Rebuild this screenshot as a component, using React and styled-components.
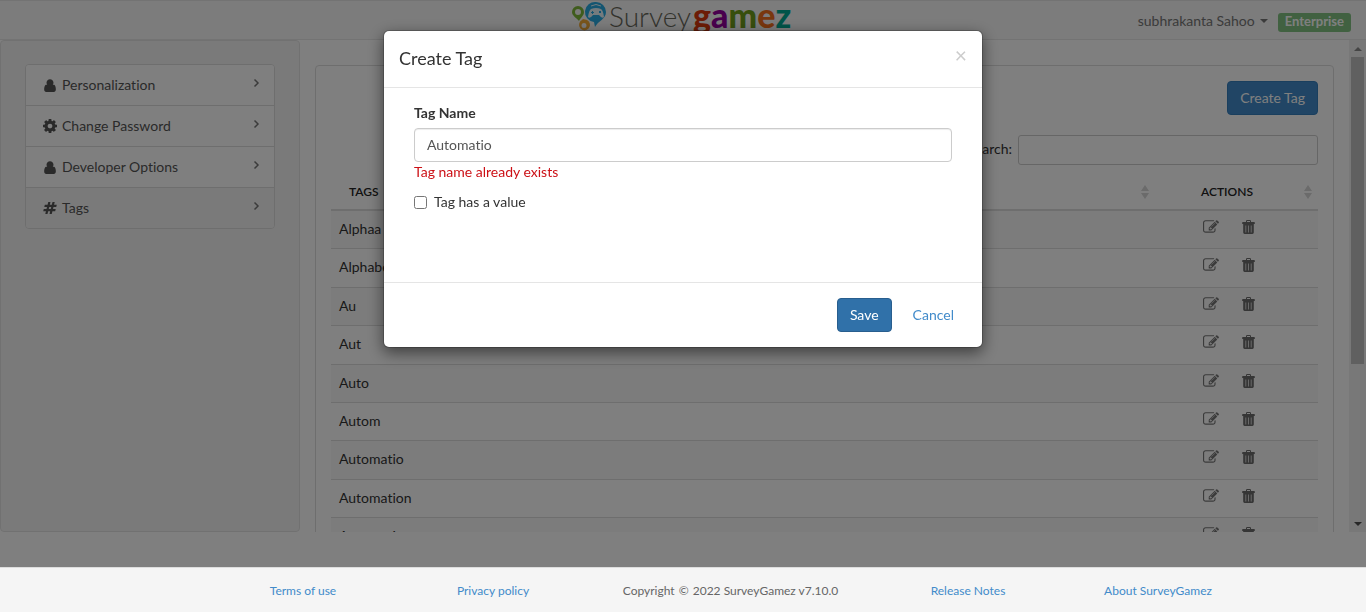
import React, { useState } from 'react';
import styled, { createGlobalStyle } from 'styled-components';

const GlobalStyle = createGlobalStyle`
  *, *::before, *::after { box-sizing: border-box; }
  body {
    margin: 0;
    background: #fff;
    color: #333;
    font-family: Lato, "Liberation Sans", sans-serif;
    font-size: 14px;
    font-variant-ligatures: none;
    line-height: 20px;
  }
  button, input { font: inherit; font-variant-ligatures: none; }
`;

const Page = styled.div`
  display: flex;
  flex-direction: column;
  height: 100vh;
  overflow: hidden;
`;

const TopBar = styled.header`
  display: grid;
  grid-template-columns: 1fr auto 1fr;
  flex: none;
  height: 40px;
  padding: 0 15px;
  background: #f8f8f8;
  border: solid #e7e7e7;
  border-width: 1px 0;
`;

const Brand = styled.a`
  grid-column: 2;
  display: flex;
`;

const Account = styled.div`
  display: flex;
  align-items: center;
  justify-content: flex-end;
  gap: 10px;
  padding-top: 4px;
`;

const UserMenu = styled.button`
  display: flex;
  align-items: center;
  gap: 5px;
  padding: 0 0 2px;
  border: 0;
  background: none;
  color: #777;
`;

const Caret = styled.span`
  border: 4px solid transparent;
  border-top-color: currentColor;
  border-bottom: 0;
`;

const PlanBadge = styled.span`
  padding: 0 7px 2px;
  border-radius: 3px;
  background: #82c382;
  color: #fff;
  font-size: 13px;
  font-weight: 700;
  line-height: 17px;
`;

const Workspace = styled.div`
  display: flex;
  flex: 1;
  min-height: 0;
  margin-bottom: 35px;
  overflow: hidden;
`;

const Sidebar = styled.aside`
  flex: none;
  width: 300px;
  padding: 23px 24px;
  background: #f5f5f5;
  border: 1px solid #e3e3e3;
  border-radius: 4px;
`;

const Menu = styled.nav`
  border: 1px solid #ddd;
  border-radius: 4px;
  overflow: hidden;
`;

const MenuLink = styled.a`
  display: flex;
  align-items: center;
  gap: 5px;
  padding: 10px 14px 10px 17px;
  background: ${(p) => (p.$active ? '#f5f5f5' : '#fff')};
  color: #555;
  text-decoration: none;
  & + & { border-top: 1px solid #ddd; }
  & > span { flex: 1; }
`;

const Glyph = styled.svg`
  flex: none;
  width: ${(p) => p.$size || 14}px;
  height: 14px;
  fill: ${(p) => p.$color || '#555'};
`;

const Chevron = styled.svg`
  width: 7px;
  height: 10px;
  margin-bottom: 5px;
  fill: none;
  stroke: #777;
  stroke-width: 1.5;
`;

const Main = styled.main`
  flex: 1;
  min-width: 0;
  padding: 25px 15px 0;
`;

const Panel = styled.section`
  padding: 15px;
  border: 1px solid #ddd;
  border-radius: 4px;
`;

const Actions = styled.div`
  display: flex;
  justify-content: flex-end;
  margin-bottom: 20px;
`;

const PrimaryButton = styled.button`
  height: 34px;
  padding: 0 12px;
  border: 1px solid ${(p) => (p.$pressed ? '#285e8e' : '#357ebd')};
  border-radius: 4px;
  background: ${(p) => (p.$pressed ? '#3071a9' : '#428bca')};
  color: #fff;
`;

const SearchRow = styled.div`
  display: flex;
  align-items: flex-start;
  justify-content: flex-end;
  gap: 6px;
  margin-bottom: 8px;
`;

const SearchLabel = styled.label`
  padding-top: 4px;
`;

const SearchInput = styled.input`
  width: 300px;
  height: 30px;
  padding: 5px 10px;
  border: 1px solid #ccc;
  border-radius: 3px;
  background: #fff;
`;

const TagTable = styled.table`
  width: 100%;
  border-collapse: separate;
  border-spacing: 0;
  table-layout: fixed;
`;

const ActionCol = styled.col`
  width: 163px;
`;

const HeadCell = styled.th`
  height: 38px;
  padding: 2px 6px 0 ${(p) => p.$indent}px;
  border-bottom: 2px solid #ddd;
  color: #222;
  font-size: 12px;
  font-weight: 600;
  text-align: left;
  text-transform: uppercase;
`;

const HeadContent = styled.div`
  display: flex;
  align-items: center;
  justify-content: space-between;
`;

const Row = styled.tr`
  background: #fff;
  &:nth-child(odd) { background: #f9f9f9; }
  &:not(:first-child) > td { border-top: 1px solid #ddd; }
`;

const Cell = styled.td`
  padding: 7px 8px 9px ${(p) => p.$indent || 8}px;
  line-height: 1.53;
  vertical-align: top;
`;

const RowTools = styled.div`
  display: flex;
  align-items: center;
  gap: 23px;
  height: 18px;
`;

const ToolButton = styled.button`
  display: flex;
  padding: 0;
  border: 0;
  background: none;
`;

const Scrollbar = styled.div`
  display: flex;
  flex: none;
  flex-direction: column;
  width: 17px;
  padding: 0 2px;
  background: #f1f1f1;
`;

const ScrollArrow = styled.span`
  display: flex;
  flex: none;
  align-items: center;
  justify-content: center;
  height: 17px;
  &::before {
    content: '';
    border: 4px solid transparent;
    ${(p) => (p.$down
      ? 'border-top-color: #505050; border-bottom: 0;'
      : 'border-bottom-color: #8b8b8b; border-top: 0;')}
  }
`;

const ScrollTrack = styled.div`
  flex: 1;
`;

const ScrollThumb = styled.div`
  height: 67%;
  background: #c1c1c1;
`;

const Backdrop = styled.div`
  position: fixed;
  inset: 0;
  z-index: 10;
  padding: 30px 0;
  background: rgba(0, 0, 0, 0.5);
`;

const Dialog = styled.form`
  max-width: 600px;
  margin: 0 auto;
  border: 1px solid rgba(0, 0, 0, 0.2);
  border-radius: 6px;
  background: #fff;
  background-clip: padding-box;
  box-shadow: 0 5px 15px rgba(0, 0, 0, 0.5);
`;

const DialogHeader = styled.div`
  display: flex;
  justify-content: space-between;
  padding: 14px 15px 16px;
  border-bottom: 1px solid #e5e5e5;
`;

const DialogTitle = styled.h4`
  margin: 0;
  font-size: 18px;
  font-weight: 400;
  line-height: 26px;
`;

const CloseButton = styled.button`
  height: 20px;
  padding: 0;
  border: 0;
  background: none;
  color: #ccc;
  font-size: 21px;
  line-height: 20px;
`;

const DialogBody = styled.div`
  min-height: 194px;
  padding: 15px 30px;
`;

const FieldLabel = styled.label`
  display: block;
  margin-bottom: 5px;
  font-weight: 700;
`;

const TextInput = styled.input`
  display: block;
  width: 100%;
  height: 34px;
  padding: 5px 12px 7px;
  border: 1px solid #ccc;
  border-radius: 4px;
  color: #555;
  box-shadow: inset 0 1px 1px rgba(0, 0, 0, 0.075);
`;

const ErrorText = styled.p`
  margin: 0 0 10px;
  color: #cc1016;
`;

const CheckLabel = styled.label`
  display: flex;
  align-items: center;
  gap: 7px;
`;

const Checkbox = styled.input`
  width: 13px;
  height: 13px;
  margin: 0;
`;

const DialogFooter = styled.div`
  display: flex;
  justify-content: flex-end;
  gap: 8px;
  padding: 15px;
  border-top: 1px solid #e5e5e5;
`;

const LinkButton = styled.button`
  height: 34px;
  padding: 0 13px;
  border: 0;
  background: none;
  color: #428bca;
`;

const Footer = styled.footer`
  position: relative;
  z-index: 20;
  flex: none;
  height: 45px;
  padding: 13px 0;
  border-top: 1px solid #ddd;
  background: #f5f5f5;
  color: #666;
  font-size: 12px;
`;

const FooterGrid = styled.div`
  display: grid;
  grid-template-columns: repeat(12, 1fr);
  max-width: 1140px;
  margin: 0 auto;
  text-align: center;
`;

const FooterItem = styled.div`
  grid-column: ${(p) => p.$from} / ${(p) => p.$to};
  white-space: nowrap;
`;

const FooterLink = styled.a`
  color: #428bca;
  text-decoration: none;
`;

const CopyrightSign = styled.span`
  margin: 0 1px;
`;

const PATHS = {
  user: 'M1280 1399q0 109-62.500 187t-150.500 78h-854q-88 0-150.500-78t-62.500-187q0-85 8.500-160.500t31.500-152 58.500-131 94-89 134.500-34.500q131 128 313 128t313-128q76 0 134.500 34.500t94 89 58.500 131 31.500 152 8.500 160.500zM1024 640q0 159-112.500 271.500t-271.500 112.500-271.500-112.500-112.500-271.500 112.500-271.500 271.500-112.500 271.500 112.500 112.500 271.500z',
  cog: 'M1024 896q0-106-75-181t-181-75-181 75-75 181 75 181 181 75 181-75 75-181zm512-109v222q0 12-8 23t-20 13l-185 28q-19 54-39 91 35 50 107 138 10 12 10 25t-9 23q-27 37-99 108t-94 71q-12 0-26-9l-138-108q-44 23-91 38-16 136-29 186-7 28-36 28h-222q-14 0-24.500-8.500t-11.500-21.500l-28-184q-49-16-90-37l-141 107q-10 9-25 9-14 0-25-11-126-114-165-168-7-10-7-23 0-12 8-23 15-21 51-66.500t54-70.500q-27-50-41-99l-183-27q-13-2-21-12.500t-8-23.500v-222q0-12 8-23t19-13l186-28q14-46 39-92-40-57-107-138-10-12-10-24 0-10 9-23 26-36 98.500-107.500t94.500-71.500q13 0 26 10l138 107q44-23 91-38 16-136 29-186 7-28 36-28h222q14 0 24.500 8.500t11.500 21.500l28 184q49 16 90 37l142-107q9-9 24-9 13 0 25 10 129 119 165 170 7 8 7 22 0 12-8 23-15 21-51 66.500t-54 70.500q26 50 41 98l183 28q13 2 21 12.500t8 23.500z',
  hash: 'M991 1024l64-256h-254l-64 256h254zm768-504l-56 224q-7 24-31 24h-327l-64 256h311q15 0 25 12 10 14 6 28l-56 224q-5 24-31 24h-327l-81 328q-7 24-31 24h-224q-16 0-26-12-9-12-6-28l78-312h-254l-81 328q-7 24-31 24h-225q-15 0-25-12-9-12-6-28l78-312h-311q-15 0-25-12-9-12-6-28l56-224q7-24 31-24h327l64-256h-311q-15 0-25-12-10-14-6-28l56-224q5-24 31-24h327l81-328q7-24 32-24h224q15 0 25 12 9 12 6 28l-78 312h254l81-328q7-24 32-24h224q15 0 25 12 9 12 6 28l-78 312h311q15 0 25 12 9 12 6 28z',
  edit: 'M888 1184l116-116-152-152-116 116v56h96v96h56zm440-720q-16-16-33 1l-350 350q-17 17-1 33t33-1l350-350q17-17 1-33zm80 594v190q0 119-84.500 203.500t-203.500 84.500h-832q-119 0-203.500-84.500t-84.500-203.500v-832q0-119 84.500-203.500t203.500-84.500h832q63 0 117 25 15 7 18 23 3 17-9 29l-49 49q-14 14-32 8-23-6-45-6h-832q-66 0-113 47t-47 113v832q0 66 47 113t113 47h832q66 0 113-47t47-113v-126q0-13 9-22l64-64q15-15 35-7t20 29zm-96-738l288 288-672 672h-288v-288zm444 132l-92 92-288-288 92-92q28-28 68-28t68 28l152 152q28 28 28 68t-28 68z',
};

const BOXES = {
  user: '0 128 1280 1536',
  cog: '0 128 1536 1536',
  hash: '0 128 1792 1536',
  edit: '0 128 1792 1536',
};

function Icon({ name, size, color }) {
  return (
    <Glyph viewBox={BOXES[name]} $size={size} $color={color} aria-hidden="true">
      <path d={PATHS[name]} />
    </Glyph>
  );
}

function TrashIcon() {
  return (
    <Glyph viewBox="0 0 13 14" $size={13} $color="#6c6c6c" aria-hidden="true">
      <path fillRule="evenodd" d="M4 2V1.200Q4 0 5.200 0h2.600Q9 0 9 1.200V2h3.200q.6 0 .6.600V4H.2V2.600Q.2 2 .8 2zM5 2h3V1H5zM1.200 4h10.600v8.600q0 1.400-1.400 1.400H2.600q-1.400 0-1.400-1.400zM3.500 5.500v7h.7v-7zm2.600 0v7h.7v-7zm2.700 0v7h.7v-7z" />
    </Glyph>
  );
}

function SortIcon() {
  return (
    <svg width="8" height="14" viewBox="0 0 8 14" fill="#d6d6d6" aria-hidden="true">
      <path d="M4 0l4 6H0zM4 14L0 8h8z" />
    </svg>
  );
}

function Logo() {
  return (
    <svg width="222" height="38" viewBox="0 0 222 38" role="img" aria-label="SurveyGamez">
      <path fill="#7fb93a" fillRule="evenodd" d="M6 5a6 6 0 0 1 6 6c0 4-4 6-5 9-2-3-7-5-7-9a6 6 0 0 1 6-6zm0 3a3 3 0 1 0 0 6 3 3 0 0 0 0-6z" />
      <path fill="#f2ac38" fillRule="evenodd" d="M11 18l4 1a5.500 5.500 0 1 1-5 0zm1 4a2.500 2.500 0 1 0 0 5 2.500 2.500 0 0 0 0-5z" />
      <path fill="#29abe2" d="M24 1a10 10 0 0 1 10 10c0 7-8 9-11 15l-1-5A10 10 0 0 1 24 1z" />
      <path fill="#e8f6fc" fillRule="evenodd" d="M19 8q5-2 10 0 2 1 3 8-2 2-5-2h-6q-3 4-5 2 1-7 3-8zm1 2v1h-1v1h1v1h1v-1h1v-1h-1v-1zm7 0v2h2v-2z" />
      <path fill="none" stroke="#e8f6fc" d="M19 5q5-3 10 0" />
      <text x="37" y="26" fill="#666659" fontFamily="Lato, sans-serif" fontSize="28" fontWeight="300">Survey</text>
      <text x="121" y="27" fontFamily="Lato, sans-serif" fontSize="34" fontWeight="900">
        <tspan fill="#d9380b">g</tspan>
        <tspan fill="#93009c">a</tspan>
        <tspan fill="#6f9c1b">m</tspan>
        <tspan fill="#f26f1d">e</tspan>
        <tspan fill="#00a892">z</tspan>
      </text>
    </svg>
  );
}

const MENU = [
  { icon: 'user', label: 'Personalization' },
  { icon: 'cog', label: 'Change Password' },
  { icon: 'user', label: 'Developer Options' },
  { icon: 'hash', label: 'Tags', active: true },
];

const TAGS = ['Alphaa', 'Alphabet', 'Au', 'Aut', 'Auto', 'Autom', 'Automatio', 'Automation', 'Automations'];

export default function App() {
  const [name, setName] = useState('Automatio');
  return (
    <>
      <GlobalStyle />
      <Page>
        <TopBar>
          <Brand href="#"><Logo /></Brand>
          <Account>
            <UserMenu type="button">subhrakanta Sahoo <Caret /></UserMenu>
            <PlanBadge>Enterprise</PlanBadge>
          </Account>
        </TopBar>
        <Workspace>
          <Sidebar>
            <Menu aria-label="Settings">
              {MENU.map((m) => (
                <MenuLink key={m.label} href="#" $active={m.active}>
                  <Icon name={m.icon} />
                  <span>{m.label}</span>
                  <Chevron viewBox="0 0 7 10" aria-hidden="true"><path d="M1.500 1.500L5 5 1.500 8.500" /></Chevron>
                </MenuLink>
              ))}
            </Menu>
          </Sidebar>
          <Main>
            <Panel>
              <Actions><PrimaryButton type="button">Create Tag</PrimaryButton></Actions>
              <SearchRow>
                <SearchLabel htmlFor="search">Search:</SearchLabel>
                <SearchInput id="search" type="search" />
              </SearchRow>
              <TagTable>
                <colgroup><col /><ActionCol /></colgroup>
                <thead>
                  <tr>
                    <HeadCell $indent={18}><HeadContent>Tags <SortIcon /></HeadContent></HeadCell>
                    <HeadCell $indent={46}><HeadContent>Actions <SortIcon /></HeadContent></HeadCell>
                  </tr>
                </thead>
                <tbody>
                  {TAGS.map((tag) => (
                    <Row key={tag}>
                      <Cell>{tag}</Cell>
                      <Cell $indent={48}>
                        <RowTools>
                          <ToolButton type="button" aria-label={`Edit ${tag}`}><Icon name="edit" size={16} color="#777" /></ToolButton>
                          <ToolButton type="button" aria-label={`Delete ${tag}`}><TrashIcon /></ToolButton>
                        </RowTools>
                      </Cell>
                    </Row>
                  ))}
                </tbody>
              </TagTable>
            </Panel>
          </Main>
          <Scrollbar aria-hidden="true">
            <ScrollArrow />
            <ScrollTrack><ScrollThumb /></ScrollTrack>
            <ScrollArrow $down />
          </Scrollbar>
        </Workspace>
        <Footer>
          <FooterGrid>
            <FooterItem $from={2} $to={4}><FooterLink href="#">Terms of use</FooterLink></FooterItem>
            <FooterItem $from={4} $to={6}><FooterLink href="#">Privacy policy</FooterLink></FooterItem>
            <FooterItem $from={6} $to={9}>Copyright <CopyrightSign>©</CopyrightSign> 2022 SurveyGamez v7.10.0</FooterItem>
            <FooterItem $from={9} $to={11}><FooterLink href="#">Release Notes</FooterLink></FooterItem>
            <FooterItem $from={11} $to={13}><FooterLink href="#">About SurveyGamez</FooterLink></FooterItem>
          </FooterGrid>
        </Footer>
      </Page>
      <Backdrop>
        <Dialog role="dialog" aria-labelledby="dialog-title" onSubmit={(e) => e.preventDefault()}>
          <DialogHeader>
            <DialogTitle id="dialog-title">Create Tag</DialogTitle>
            <CloseButton type="button" aria-label="Close">×</CloseButton>
          </DialogHeader>
          <DialogBody>
            <FieldLabel htmlFor="tag-name">Tag Name</FieldLabel>
            <TextInput id="tag-name" type="text" value={name} onChange={(e) => setName(e.target.value)} />
            <ErrorText>Tag name already exists</ErrorText>
            <CheckLabel><Checkbox type="checkbox" />Tag has a value</CheckLabel>
          </DialogBody>
          <DialogFooter>
            <PrimaryButton type="submit" $pressed>Save</PrimaryButton>
            <LinkButton type="button">Cancel</LinkButton>
          </DialogFooter>
        </Dialog>
      </Backdrop>
    </>
  );
}
